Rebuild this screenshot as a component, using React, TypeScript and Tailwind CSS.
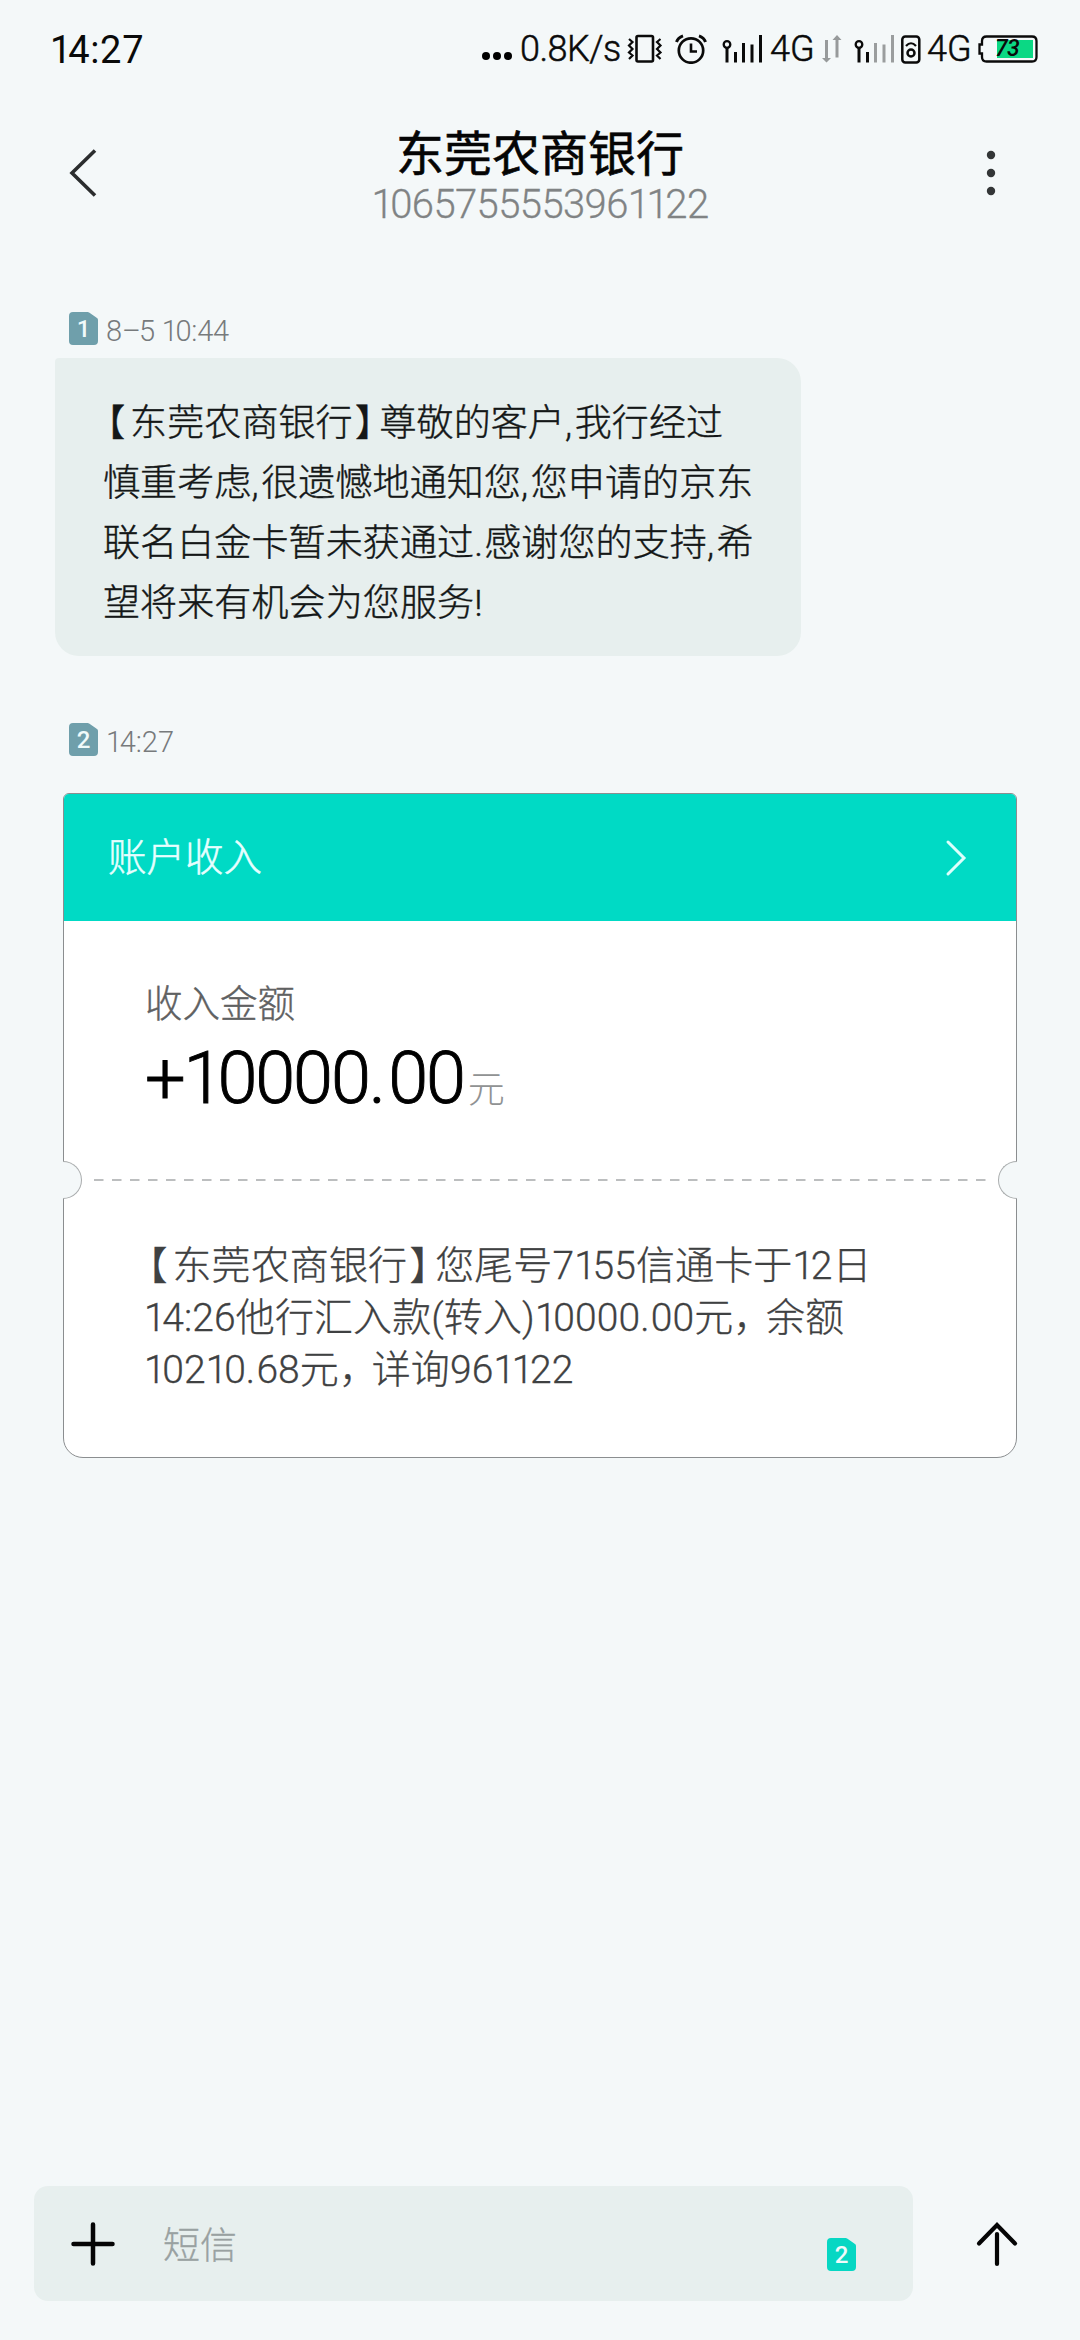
import React from "react";

/** Text with tightened brackets, wide commas and a narrow figure 1. */
function T({ children, className = "" }: { children: string; className?: string }) {
  return (
    <span className={"whitespace-pre " + className}>
      {children.split(/([1【】，,.–])/).map((s, i) =>
        s === "1" ? (
          <span key={i} className="tracking-[-0.085em]">1</span>
        ) : s === "【" ? (
          <span key={i} className="-ml-[0.4em] tracking-[0.13em]">【</span>
        ) : s === "】" ? (
          <span key={i} className="ml-[0.06em] tracking-[-0.34em]">】</span>
        ) : s === "，" ? (
          <span key={i} className="tracking-[-0.16em]">，</span>
        ) : s === "–" ? (
          <span key={i} className="tracking-[-0.06em]">–</span>
        ) : s === "," ? (
          <span key={i} className="tracking-[0.07em]">,</span>
        ) : s === "." ? (
          <span key={i} className="tracking-[0.03em]">.</span>
        ) : (
          s
        )
      )}
    </span>
  );
}

function Sim({ n, color }: { n: string; color: string }) {
  return (
    <div className="relative h-[33px] w-[29px] shrink-0">
      <svg className="absolute inset-0" width="29" height="33" viewBox="0 0 29 33">
        <path d="M4 0H18.500Q19.500 0 20.500 .7L28 6Q29 6.700 29 8V29Q29 33 25 33H4Q0 33 0 29V4Q0 0 4 0Z" fill={color} />
      </svg>
      <span className="absolute inset-0 text-center text-[24px] leading-[35px] font-medium text-[#f0fafa]">{n}</span>
    </div>
  );
}

function Vibrate() {
  return (
    <svg width="36" height="30" viewBox="0 0 36 30" fill="none" stroke="#0a0a0a">
      <rect x="9.500" y="2" width="16.500" height="25.500" rx="1.500" strokeWidth="2.600" />
      <path d="M2 5l3.500 3L2 11.500 5.500 15 2 18.500 5.500 21.500 2 25M33.500 5L30 8l3.500 3.500L30 15l3.500 3.500L30 21.500l3.500 3.500" strokeWidth="2.200" />
    </svg>
  );
}

function Alarm() {
  return (
    <svg width="32" height="30" viewBox="0 0 32 30" fill="none" stroke="#0a0a0a" strokeWidth="2.700">
      <circle cx="16" cy="16.500" r="12.200" />
      <path d="M16 9.500v8h6" strokeWidth="2.600" />
      <path d="M1.500 8Q3 3.500 8 1.800M30.500 8Q29 3.500 24 1.800" strokeWidth="3" />
    </svg>
  );
}

function Signal({ full }: { full: boolean }) {
  const c = full ? "#0a0a0a" : "#9a9d9e";
  return (
    <svg width="41" height="28" viewBox="0 0 41 28" fill="none" stroke="#0a0a0a" strokeWidth="3">
      <circle cx="5" cy="9.500" r="3.300" strokeWidth="2.300" />
      <path d="M5 13v14.500" />
      <path d="M13.500 17v10.500" />
      <path d="M21.500 8v19.500M30 9.500v18M38.500 0v27.500" stroke={c} />
    </svg>
  );
}

function StatusBar() {
  return (
    <div className="flex h-[98px] shrink-0 items-center pl-[51px] font-[Roboto,'Noto_Sans_CJK_SC',sans-serif] text-[#0a0a0a]">
      <div className="-ml-px w-[431px] pt-px text-[38px] leading-[40px] tracking-[0.7px]"><T>14:27</T></div>
      <svg width="31" height="10" viewBox="0 0 31 10" className="mt-[14px] shrink-0">
        <circle cx="5" cy="5" r="4" /><circle cx="16" cy="5" r="4" /><circle cx="27" cy="5" r="4" />
      </svg>
      <div className="ml-[8px] w-[107px] whitespace-nowrap text-[36px] leading-[40px] font-light tracking-[-0.5px] [-webkit-text-stroke:0.5px_#0a0a0a]">0.8K/s</div>
      <div className="w-[48px] shrink-0"><Vibrate /></div>
      <div className="w-[47px] shrink-0"><Alarm /></div>
      <div className="w-[48px] shrink-0"><Signal full /></div>
      <div className="w-[52px] shrink-0 text-[36px] leading-[40px] font-light [-webkit-text-stroke:0.5px_#0a0a0a]">4G</div>
      <svg className="mr-[12px] shrink-0" width="20" height="28" viewBox="0 0 20 28" fill="#979a9b">
        <path d="M3 5h3v18h3l-4.500 4.500L0 23h3zM13.500 22.500h3V5h3L15 0l-4.500 5h3z" />
      </svg>
      <div className="w-[47px] shrink-0"><Signal full={false} /></div>
      <svg className="shrink-0" width="20" height="29" viewBox="0 0 20 29" fill="none" stroke="#0a0a0a" strokeWidth="2.500">
        <rect x="1.300" y="1.500" width="17" height="26" rx="3" />
        <circle cx="10" cy="18" r="3.500" />
        <path d="M5 11Q10 5.500 15 11" strokeWidth="2.200" />
      </svg>
      <div className="ml-[6px] w-[51px] shrink-0 text-[36px] leading-[40px] font-light [-webkit-text-stroke:0.5px_#0a0a0a]">4G</div>
      <div className="relative h-[28px] w-[60px] shrink-0">
        <svg className="absolute inset-0" width="60" height="28" viewBox="0 0 60 28" fill="none">
          <rect x="19" y="5" width="36" height="18" fill="#0bd884" />
          <path d="M4 9.500V6Q4 1.500 8.500 1.500H54Q58.500 1.500 58.500 6V22Q58.500 26.500 54 26.500H8.500Q4 26.500 4 22V18.500H1.500V9.500Z" stroke="#0a0a0a" strokeWidth="2.300" />
        </svg>
        <span className="absolute top-0 left-[17px] text-[23px] leading-[28px] font-medium tracking-[-0.7px] italic">73</span>
      </div>
    </div>
  );
}

function Header() {
  return (
    <header className="flex h-[150px] shrink-0 items-center">
      <div className="flex w-[200px] pl-[68px]">
        <svg width="32" height="50" viewBox="0 0 32 50" fill="none" stroke="#2b2d2e" strokeWidth="3.600">
          <path d="M27 2.500L4 25l23 22.500" />
        </svg>
      </div>
      <div className="flex flex-1 flex-col items-center pt-[11px]">
        <h1 className="text-[48px] leading-[52px] font-normal text-[#050505] [-webkit-text-stroke:0.6px_#050505]">东莞农商银行</h1>
        <div className="text-[40px] leading-[48px] font-light tracking-[-0.6px] text-[#808384] [-webkit-text-stroke:0.3px_#808384]"><T>1065755553961122</T></div>
      </div>
      <div className="flex w-[200px] justify-end pr-[84px]">
        <svg width="10" height="46" viewBox="0 0 10 46" fill="#333637">
          <circle cx="5" cy="5" r="4.200" /><circle cx="5" cy="23" r="4.200" /><circle cx="5" cy="41" r="4.200" />
        </svg>
      </div>
    </header>
  );
}

function Card() {
  return (
    <section className="ml-[63px] flex h-[665px] w-[954px] shrink-0 flex-col rounded-t-[6px] rounded-b-[20px] border border-[#8b8e90] bg-white">
      <div className="flex h-[127px] shrink-0 items-center justify-between rounded-t-[5px] bg-[#00dac5] pr-[49px] pl-[44px] text-[38.500px] font-light text-[#e6ffff] [-webkit-text-stroke:0.5px_#e6ffff]">
        <span>账户收入</span>
        <svg width="22" height="38" viewBox="0 0 22 38" fill="none" stroke="#dcfffc" strokeWidth="3" strokeLinecap="round">
          <path d="M3 3l16 16L3 35" />
        </svg>
      </div>
      <div className="flex h-[241px] shrink-0 flex-col pt-[55px] pl-[81px]">
        <div className="text-[37.500px] leading-[56px] font-light text-[#5f6162] [-webkit-text-stroke:0.4px_#5f6162]">收入金额</div>
        <div className="flex items-baseline pt-[5px] text-[72px] leading-[84px] font-light tracking-[-2.100px] text-black [-webkit-text-stroke:0.9px_#000]">
          <T>+10000.00</T>
          <span className="ml-[4px] text-[37px] tracking-normal text-[#909293] [-webkit-text-stroke:0]">元</span>
        </div>
      </div>
      <div className="flex h-[36px] shrink-0 items-center justify-between">
        <div className="-ml-px h-[38px] w-[19px] shrink-0 rounded-r-full border-[1.500px] border-l-0 border-[#a9acad] bg-[#f4f8f9]" />
        <svg width="892" height="2" viewBox="0 0 892 2" stroke="#7b7e80" strokeWidth="1.200">
          <path d="M0 1H892" strokeDasharray="9.500 8.500" />
        </svg>
        <div className="-mr-px h-[38px] w-[19px] shrink-0 rounded-l-full border-[1.500px] border-r-0 border-[#a9acad] bg-[#f4f8f9]" />
      </div>
      <div className="flex flex-col pt-[42px] pl-[80px] text-[39px] leading-[52px] font-light tracking-[0.1px] text-[#3f4142] [-webkit-text-stroke:0.3px_#3f4142]">
        <T>【东莞农商银行】您尾号7155信通卡于12日</T>
        <T>14:26他行汇入款(转入)10000.00元，余额</T>
        <T>10210.68元，详询961122</T>
      </div>
    </section>
  );
}

function Composer() {
  return (
    <footer className="mb-[39px] ml-[34px] flex h-[115px] shrink-0 items-center">
      <div className="flex h-full w-[879px] items-center rounded-[14px] bg-[#e7efee] pr-[57px] pl-[36px]">
        <svg width="46" height="46" viewBox="0 0 46 46" stroke="#050505" strokeWidth="4.500" strokeLinecap="round">
          <path d="M3.500 23h39M23 3.500v39" />
        </svg>
        <span className="ml-[47px] flex-1 pt-[6px] text-[37px] font-light text-[#99a1a1] [-webkit-text-stroke:0.3px_#99a1a1]">短信</span>
        <div className="pt-[21px]"><Sim n="2" color="#07d7c3" /></div>
      </div>
      <svg className="ml-[63px]" width="42" height="46" viewBox="0 0 42 46" fill="none" stroke="#050505" strokeWidth="4.200" strokeLinecap="round">
        <path d="M21 13v30M3 22.500L21 4l18 18.500" />
      </svg>
    </footer>
  );
}

export default function App() {
  return (
    <div className="flex h-[2340px] w-[1080px] flex-col overflow-hidden bg-[#f4f8f9] font-[Roboto,'Noto_Sans_CJK_SC',sans-serif]">
      <StatusBar />
      <Header />
      <main className="flex flex-1 flex-col">
        <div className="flex h-[110px] shrink-0 items-end gap-[8px] pb-[13px] pl-[69px]">
          <Sim n="1" color="#6f9fab" />
          <span className="-mb-px text-[29px] leading-[30px] font-light tracking-[-0.2px] text-[#777a7c]"><T>8–5 10:44</T></span>
        </div>
        <div className="ml-[55px] flex h-[298px] w-[746px] shrink-0 flex-col rounded-[24px] rounded-tl-[4px] bg-[#e7efee] pt-[36px] pl-[48px] text-[37px] leading-[60px] font-light tracking-[0.120px] text-[#141717] [-webkit-text-stroke:0.4px_#141717]">
          <T>【东莞农商银行】尊敬的客户,我行经过</T>
          <T>慎重考虑,很遗憾地通知您,您申请的京东</T>
          <T>联名白金卡暂未获通过.感谢您的支持,希</T>
          <T>望将来有机会为您服务!</T>
        </div>
        <div className="flex h-[137px] shrink-0 items-end gap-[8px] pb-[37px] pl-[69px]">
          <Sim n="2" color="#6f9fab" />
          <span className="-mb-px text-[29px] leading-[30px] font-light text-[#777a7c]"><T>14:27</T></span>
        </div>
        <Card />
      </main>
      <Composer />
    </div>
  );
}
